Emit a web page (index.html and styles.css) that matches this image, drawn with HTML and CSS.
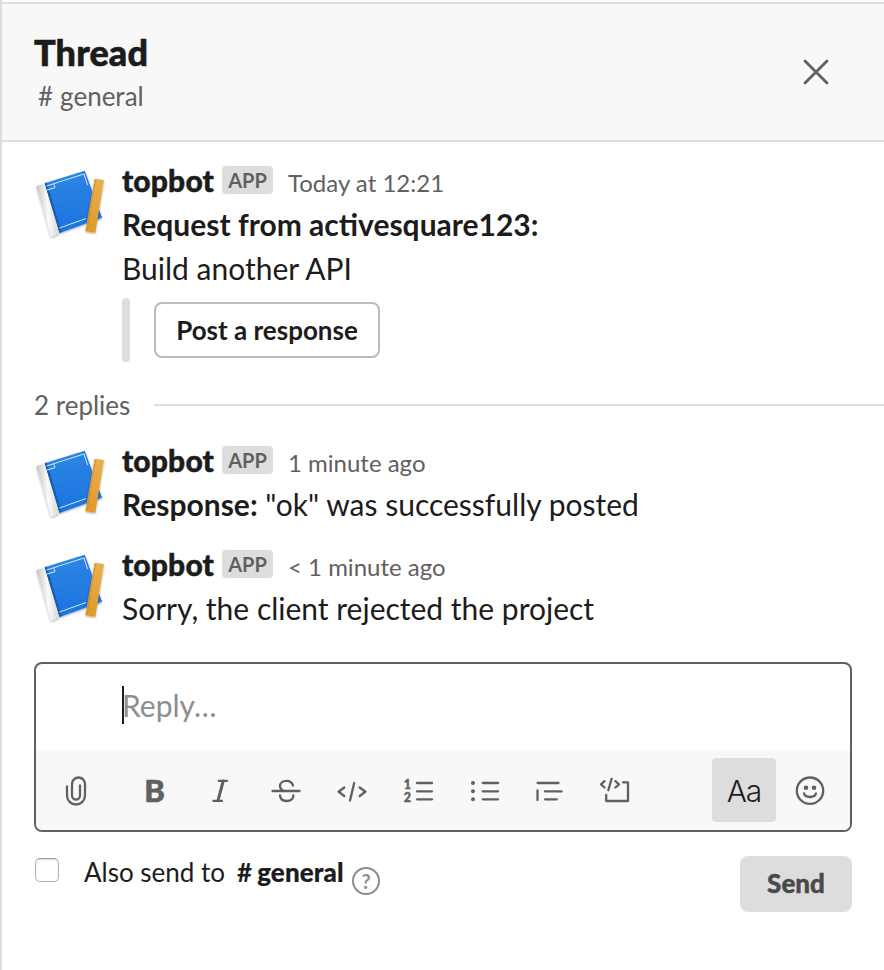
FILE: index.html
```html
<!DOCTYPE html>
<html lang="en">
<head>
<meta charset="utf-8">
<title>Thread</title>
<link rel="stylesheet" href="styles.css">
</head>
<body>
<svg class="defs" width="0" height="0" aria-hidden="true">
  <defs>
    <linearGradient id="cover" x1="0" y1="0" x2="0.2" y2="1"><stop offset="0" stop-color="#2f88e3"/><stop offset="1" stop-color="#1c74e2"/></linearGradient>
    <linearGradient id="pages" x1="0" y1="0.1" x2="1" y2="0"><stop offset="0" stop-color="#c4c4c4"/><stop offset="0.45" stop-color="#fafafa"/><stop offset="1" stop-color="#cccccc"/></linearGradient>
    <linearGradient id="wood" x1="0" y1="0" x2="0" y2="1"><stop offset="0" stop-color="#e8b04a"/><stop offset="1" stop-color="#e09a2c"/></linearGradient>
    <filter id="shade" x="-10%" y="-10%" width="120%" height="120%"><feDropShadow dx="0" dy="1" stdDeviation="1" flood-opacity="0.35"/></filter>
    <symbol id="book" viewBox="0 0 72 72">
      <g filter="url(#shade)">
        <path d="M2.7 19.2Q2.7 18 4 17.5L11 15.3L25.8 65L18.8 68.6Q17.5 68.8 16.8 67.4Z" fill="url(#pages)"/>
        <path d="M10.7 15.3L50.8 2.8L68 49.8L25.6 65Z" fill="url(#cover)"/>
      </g>
      <path d="M10.7 15.3L12.8 14.6L27.6 64L25.6 65Z" fill="#1a5cae"/>
      <path d="M12.5 18L50 6L53.5 17M25.5 60L52 50.5M13 22L21 19.7L19.7 15.8" fill="none" stroke="#d0e8ff" stroke-width="1"/>
      <g filter="url(#shade)"><path d="M60.6 10.7L70 12L61.3 64.8L51.4 63.2Z" fill="url(#wood)"/></g>
      <path d="M61.6 12L52.8 62.5" stroke="#b9781c" stroke-width="1.4" stroke-dasharray="0.7 1.4"/>
    </symbol>
  </defs>
</svg>
<div class="panel">
  <header class="header">
    <div class="heading">
      <h1 class="title">Thread</h1>
      <div class="channel"><span class="hash">#</span>general</div>
    </div>
    <svg class="close" viewBox="0 0 28 28"><path d="M3 3L25 25M25 3L3 25"/></svg>
  </header>
  <main class="content">
    <article class="message">
      <svg class="avatar"><use href="#book"/></svg>
      <div class="body">
        <div class="meta"><span class="name">topbot</span><span class="tag">APP</span><span class="time">Today at 12:21</span></div>
        <div class="text"><b class="request">Request from activesquare123:</b></div>
        <div class="text">Build another API</div>
        <div class="attachment"><span class="bar"></span><button class="post">Post a response</button></div>
      </div>
    </article>
    <div class="replies"><span>2 replies</span><span class="rule"></span></div>
    <article class="message">
      <svg class="avatar"><use href="#book"/></svg>
      <div class="body">
        <div class="meta"><span class="name">topbot</span><span class="tag">APP</span><span class="time">1 minute ago</span></div>
        <div class="text"><b>Response:</b> "ok" was successfully posted</div>
      </div>
    </article>
    <article class="message next">
      <svg class="avatar"><use href="#book"/></svg>
      <div class="body">
        <div class="meta"><span class="name">topbot</span><span class="tag">APP</span><span class="time">&lt; 1 minute ago</span></div>
        <div class="text">Sorry, the client rejected the project</div>
      </div>
    </article>
    <section class="editor">
      <div class="input"><span class="caret"></span><span class="placeholder">Reply…</span></div>
      <div class="toolbar">
        <span class="tool attach"><svg viewBox="0 0 32 32"><path d="M7 12.5V21.5A9 9 0 0 0 25 21.5V10A6.5 6.5 0 0 0 12 10V21.5A4 4 0 0 0 20 21.5V11.5"/></svg></span>
        <span class="tool bold">B</span>
        <span class="tool"><svg viewBox="0 0 32 32"><path d="M14.7 6.8H23M9.3 26.8H18"/><path class="thick" d="M19.2 7L14 26.6"/></svg></span>
        <span class="tool"><svg viewBox="0 0 32 32"><path d="M2.5 17H29.5M23 11.5C22 8 19.5 6.8 16.5 6.8C12.5 6.8 10 9 10 12C10 14.5 11.5 16 14 17M10 21.5C10.5 25 13 27 16.5 27C20.5 27 23.3 25 23.3 21.5"/></svg></span>
        <span class="tool"><svg viewBox="0 0 32 32"><path d="M8.3 13.5L2.5 17.7L8.3 22M18.2 9L14 26.5M23.7 13.5L29.5 17.7L23.7 22"/></svg></span>
        <span class="tool"><svg viewBox="0 0 32 32"><path d="M15 9H30M15 17.3H30M15 25.3H30"/><text x="1.8" y="15">1</text><text x="1.8" y="28.2">2</text></svg></span>
        <span class="tool"><svg viewBox="0 0 32 32"><path d="M14.8 9H30M14.8 17.3H30M14.8 25.3H30"/><g class="fill"><circle cx="5" cy="9" r="2"/><circle cx="5" cy="17.3" r="2"/><circle cx="5" cy="25.3" r="2"/></g></svg></span>
        <span class="tool"><svg viewBox="0 0 32 32"><path d="M3.6 9H24.5M3.5 16.5V26M11 17.3H27.6M11 25.3H22.8"/></svg></span>
        <span class="tool"><svg viewBox="0 0 32 32"><path d="M4.5 7.2L1 10.3L4.5 13.5M11.6 4.8L8.3 16.2M15.4 7.2L19 10.3L15.4 13.5M23 8.3H28V27H6.2V20.8"/></svg></span>
        <span class="tool format">Aa</span>
        <span class="tool"><svg viewBox="0 0 32 32"><circle cx="16" cy="16.7" r="13.2"/><path d="M10 19.3C11 24.2 21 24.2 22 19.3"/><g class="fill"><circle cx="12" cy="13.7" r="2.3"/><circle cx="20" cy="13.7" r="2.3"/></g></svg></span>
      </div>
    </section>
    <footer class="footer">
      <span class="checkbox"></span>
      <span class="also">Also send to</span>
      <span class="dest"><span class="hash">#</span>general</span>
      <span class="help">?</span>
      <button class="send">Send</button>
    </footer>
  </main>
</div>
</body>
</html>
```
FILE: styles.css
```css
* { box-sizing: border-box; }
body { margin: 0; background: #fff; color: #1d1c1d; font-family: Lato, "Liberation Sans", sans-serif; }
button { font-family: inherit; color: inherit; margin: 0; padding: 0; }
.defs { display: block; }
.panel { height: 970px; padding-top: 2px; border-left: 2px solid #ddd; overflow: hidden; }
.header { display: flex; justify-content: space-between; height: 140px; padding: 25px 54px 0 32px; background: #f8f8f8; border-top: 2px solid #ddd; border-bottom: 2px solid #ddd; }
.title { margin: 0; font-size: 36px; line-height: 46px; font-weight: 900; letter-spacing: 0.15px; -webkit-text-stroke: 0.6px; }
.channel { padding-left: 4px; font-size: 26px; line-height: 38px; color: #616061; margin-top: 2px; }
.channel .hash { margin-right: 7px; }
.close { width: 28px; height: 28px; margin-top: 29px; fill: none; stroke: #616061; stroke-width: 2.8; stroke-linecap: round; }
.content { padding: 18px 0 0 32px; }
.message { display: flex; gap: 16px; }
.next { margin-top: 16px; }
.avatar { width: 72px; height: 72px; margin-top: 8px; flex: none; }
.meta { display: flex; height: 44px; line-height: 41px; }
.name { width: 100px; font-size: 30px; font-weight: 900; letter-spacing: 0.15px; -webkit-text-stroke: 0.5px; white-space: nowrap; }
.tag { width: 51px; height: 28px; margin: 6px 15px 0 0; border-radius: 4px; background: #ddd; color: #616061; font-size: 20px; font-weight: 700; line-height: 29px; text-align: center; }
.time { font-size: 24px; line-height: 46px; color: #616061; }
.text { font-size: 30px; line-height: 41px; height: 44px; white-space: nowrap; }
.attachment { display: flex; align-items: center; gap: 24px; margin-top: 6px; }
.bar { width: 8px; height: 64px; border-radius: 4px; background: #ddd; }
.post { width: 226px; height: 56px; border: 2px solid #bbb; border-radius: 8px; background: #fff; font-size: 26px; font-weight: 700; }
.replies { display: flex; align-items: center; height: 78px; font-size: 26px; color: #616061; padding-top: 8px; }
.replies span:first-child { width: 120px; }
.rule { flex: 1; height: 2px; background: #ddd; }
.editor { width: 818px; height: 170px; margin-top: 30px; border: 2px solid #616061; border-radius: 8px; overflow: hidden; }
.input { display: flex; align-items: center; height: 86px; padding: 0 0 5px 86px; font-size: 30px; color: #8d8d8d; }
.caret { width: 2px; height: 38px; margin-right: -2px; background: #1d1c1d; }
.toolbar { display: flex; align-items: center; gap: 2px; height: 80px; padding-left: 8px; background: #f8f8f8; }
.tool { display: flex; align-items: center; justify-content: center; width: 64px; height: 64px; color: #616061; }
.tool svg { width: 32px; height: 32px; fill: none; stroke: #616061; stroke-width: 2.3; stroke-linecap: round; stroke-linejoin: round; }
.tool .thick { stroke-width: 3; }
.tool .fill { fill: #616061; stroke: none; }
.tool text { fill: #616061; stroke-width: 0.4; font: 900 12.5px Lato, sans-serif; }
.attach { margin-right: 12px; }
.bold { padding-left: 1px; font-size: 31px; font-weight: 900; -webkit-text-stroke: 0.6px; }
.format { margin-left: 62px; padding-top: 2px; border-radius: 4px; background: #ddd; color: #1d1c1d; font: 300 30px Inter, sans-serif; letter-spacing: -1px; }
.footer { display: flex; height: 80px; padding-top: 24px; }
.checkbox { width: 24px; height: 24px; margin: 2px 25px 0 1px; border: 1px solid #b0b0b0; border-top-color: #999; border-radius: 5px; box-shadow: inset 0 1px 2px #ddd; }
.also, .dest { font-size: 26px; line-height: 32px; white-space: nowrap; }
.also { width: 153px; }
.dest { width: 115px; font-weight: 900; letter-spacing: 0.1px; -webkit-text-stroke: 0.2px; }
.dest .hash { margin-right: 5px; font-weight: 700; -webkit-text-stroke: 0; }
.help { width: 28px; height: 28px; margin-top: 11px; border: 2px solid #8d8d8d; border-radius: 50%; color: #8d8d8d; font-size: 20px; font-weight: 700; line-height: 25px; text-align: center; }
.send { width: 112px; height: 56px; margin-left: 360px; padding-bottom: 2px; border: 0; border-radius: 8px; background: #ddd; color: #4a4a4a; font-size: 26px; font-weight: 900; -webkit-text-stroke: 0.4px; }
```
